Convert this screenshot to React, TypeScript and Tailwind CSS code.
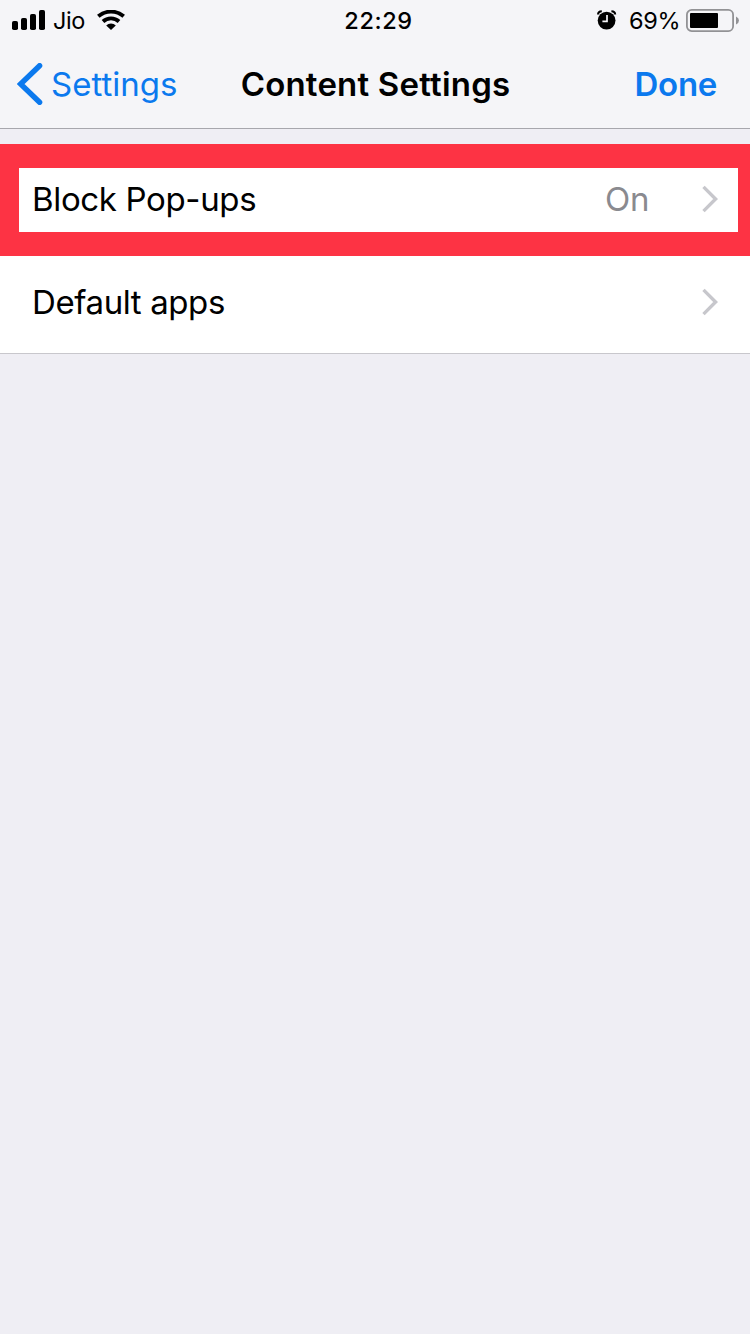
function Signal() {
  return (
    <svg className="mr-[8px] ml-[12px] block" width="33" height="20" viewBox="0 0 33 20">
      <rect x="0" y="11" width="6" height="9" rx="1.8" />
      <rect x="9" y="8" width="6" height="12" rx="1.8" />
      <rect x="18" y="4" width="6" height="16" rx="1.8" />
      <rect x="27" y="0" width="6" height="20" rx="1.8" />
    </svg>
  );
}

function Wifi() {
  return (
    <svg className="block" width="28" height="20" viewBox="0 0 28 20">
      <path d="M1.3 6.3 A19.5 19.5 0 0 1 26.7 6.3" fill="none" stroke="#000" strokeWidth="3.9" />
      <path d="M6 11.5 A11.6 11.6 0 0 1 22 11.5" fill="none" stroke="#000" strokeWidth="3.8" />
      <path d="M14 19.9 L9.2 15.6 A6.8 6.8 0 0 1 18.8 15.6 Z" />
    </svg>
  );
}

function Alarm() {
  return (
    <svg className="block" width="20" height="20" viewBox="0 0 20 20">
      <circle cx="9.6" cy="10.6" r="8.9" />
      <path d="M1 4.6 Q1 1.4 4.8 1.2 M18.2 4.6 Q18.2 1.4 14.4 1.2" fill="none" stroke="#000" strokeWidth="2" />
      <path d="M10 5 V11.4 H5.4" fill="none" stroke="#f5f5f8" strokeWidth="1.7" />
    </svg>
  );
}

function Battery() {
  return (
    <svg className="block" width="53" height="23" viewBox="0 0 53 23">
      <rect x="0.9" y="0.9" width="46.2" height="21.2" rx="4.8" fill="none" stroke="#929295" strokeWidth="1.8" />
      <rect x="4" y="4" width="28" height="15" rx="1" />
      <path d="M50 7.5 Q53 9 53 11.5 Q53 14 50 15.5 Z" fill="#929295" />
    </svg>
  );
}

function Chevron() {
  return (
    <svg className="block" width="17" height="28" viewBox="0 0 17 28">
      <path d="M1.5 1.9 L13.6 14 L1.5 26.1" fill="none" stroke="#c7c7cc" strokeWidth="3.4" />
    </svg>
  );
}

export default function App() {
  return (
    <div className="flex h-[1334px] w-[750px] flex-col bg-[#efeef4] font-[Inter,sans-serif] text-[33px] leading-[40px] whitespace-nowrap text-black">
      <header className="h-[129px] border-b border-[#a7a7ad] bg-[#f5f5f8]">
        <div className="grid h-10 grid-cols-[1fr_auto_1fr] items-center text-[23.5px] leading-[30px]">
          <div className="flex items-center">
            <Signal />
            <span className="w-[44px] pt-[1px] tracking-[-0.4px]">Jio</span>
            <Wifi />
          </div>
          <span className="pt-[1px] pl-[7px] font-medium tracking-[0.6px]">22:29</span>
          <div className="flex items-center justify-end pr-[11px]">
            <Alarm />
            <span className="mr-[7px] ml-[12px] w-[50px] pt-[1px] tracking-[-0.3px]">69%</span>
            <Battery />
          </div>
        </div>
        <nav className="grid h-[88px] grid-cols-[1fr_auto_1fr] items-center">
          <div className="flex items-center pl-[17px] text-[#0b79ee]">
            <svg className="mr-[8px] block" width="26" height="42" viewBox="0 0 26 42">
              <path d="M22.6 2.7 L3.6 21 L22.6 39.3" fill="none" stroke="#0b79ee" strokeWidth="5.4" strokeLinecap="round" />
            </svg>
            <span>Settings</span>
          </div>
          <h1 className="pl-[1px] font-semibold tracking-[0.2px]">Content Settings</h1>
          <span className="justify-self-end pr-[33px] font-semibold tracking-[-0.3px] text-[#0b79ee]">Done</span>
        </nav>
      </header>
      <main className="pt-[15px]">
        <div className="flex h-[112px] items-center bg-[#fd3344] pr-[12px] pl-[19px]">
          <div className="flex h-16 flex-1 items-center bg-white pr-[19px] pb-[2px] pl-[13px]">
            <span className="flex-1 pb-[1px] tracking-[-0.35px]">Block Pop-ups</span>
            <span className="mr-[53px] pb-[1px] tracking-[-0.4px] text-[#8a8a8f]">On</span>
            <Chevron />
          </div>
        </div>
        <div className="flex h-[98px] items-center border-b border-[#c8c7cc] bg-white pr-[31px] pb-[5px] pl-[32px]">
          <span className="flex-1 pb-[1px] tracking-[-0.4px]">Default apps</span>
          <Chevron />
        </div>
      </main>
    </div>
  );
}
